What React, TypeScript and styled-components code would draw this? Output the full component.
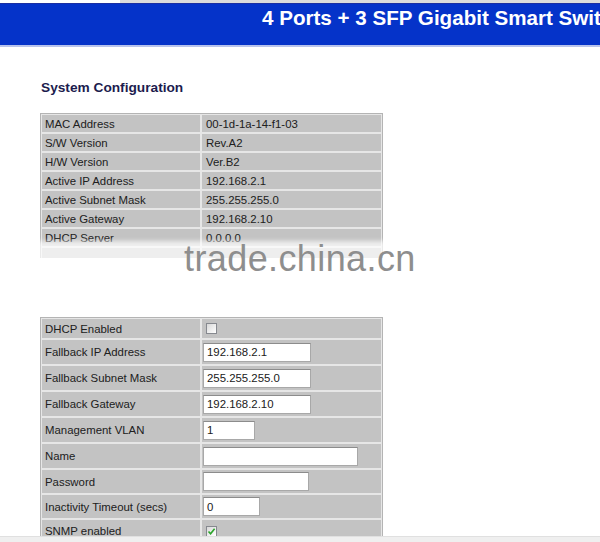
import React from "react";
import styled, { createGlobalStyle } from "styled-components";

const GlobalStyle = createGlobalStyle`
  html, body {
    margin: 0;
    padding: 0;
    background: #ffffff;
    font-family: "Liberation Sans", Arial, sans-serif;
  }
`;

const Page = styled.div`
  position: relative;
  width: 600px;
  height: 542px;
  display: flex;
  flex-direction: column;
  overflow: hidden;
`;

const TopEdge = styled.div`
  height: 3px;
  background: linear-gradient(to right, #ffffff 0 120px, #dcdcdc 120px);
`;

const Banner = styled.div`
  height: 44px;
  background: #0533c9;
  border-top: 1px solid #1b2fa3;
  border-bottom: 2px solid #b8c3ec;
  padding: 2px 0 0 262px;
  box-sizing: border-box;
  white-space: nowrap;
  overflow: hidden;
`;

const BannerTitle = styled.div`
  color: #ffffff;
  font-weight: bold;
  font-size: 20.6px;
  line-height: 24px;
`;

const Content = styled.div`
  flex: 1;
  overflow: hidden;
  padding: 33px 0 0 40px;
`;

const SectionTitle = styled.div`
  color: #1c1c4e;
  font-weight: bold;
  font-size: 13.7px;
  line-height: 16px;
  margin-left: 1px;
`;

const Clip = styled.div`
  height: 145px;
  margin-top: 17px;
  overflow: hidden;
`;

const Table = styled.div`
  display: grid;
  grid-template-columns: 158px 179px;
  gap: 2px;
  padding: 1px;
  width: fit-content;
  background: #e6e6e6;
  border: 1px solid #b4b4b4;
`;

const Cell = styled.div<{ $h: number; $pad?: number }>`
  height: ${(p) => p.$h}px;
  background: #c3c3c3;
  display: flex;
  align-items: center;
  padding-left: ${(p) => p.$pad ?? 3}px;
  font-size: 11.4px;
  color: #202020;
  white-space: nowrap;
`;

const FormTable = styled(Table)`
  margin-top: 59px;
`;

const Input = styled.div<{ $w: number }>`
  width: ${(p) => p.$w}px;
  height: 19px;
  box-sizing: border-box;
  background: #ffffff;
  border: 1px solid #a8a8a8;
  border-top-color: #8c8c8c;
  padding: 0 3px;
  display: flex;
  align-items: center;
  font-size: 11.4px;
  color: #202020;
`;

const Check = styled.span`
  width: 11px;
  height: 11px;
  box-sizing: border-box;
  border: 1px solid #86898f;
  background: linear-gradient(135deg, #d8d8d8, #ffffff);
  display: flex;
  align-items: center;
  justify-content: center;
  margin-left: 3px;
`;

const Fade = styled.div`
  position: absolute;
  left: 28px;
  top: 241px;
  width: 372px;
  height: 24px;
  background: rgba(255, 255, 255, 0.72);
  filter: blur(2px);
`;

const Watermark = styled.div`
  position: absolute;
  left: 184px;
  top: 239px;
  font-size: 36px;
  line-height: 40px;
  color: #8e8e8e;
  letter-spacing: 0.4px;
  white-space: nowrap;
`;

const StatusBar = styled.div`
  height: 5px;
  background: #efefef;
  border-top: 1px solid #e0e0e0;
`;

const info: [string, string][] = [
  ["MAC Address", "00-1d-1a-14-f1-03"],
  ["S/W Version", "Rev.A2"],
  ["H/W Version", "Ver.B2"],
  ["Active IP Address", "192.168.2.1"],
  ["Active Subnet Mask", "255.255.255.0"],
  ["Active Gateway", "192.168.2.10"],
  ["DHCP Server", "0.0.0.0"],
  ["", ""],
];

type Field =
  | { label: string; kind: "check"; checked: boolean; h: number }
  | { label: string; kind: "input"; value: string; width: number; h: number };

const fields: Field[] = [
  { label: "DHCP Enabled", kind: "check", checked: false, h: 19 },
  { label: "Fallback IP Address", kind: "input", value: "192.168.2.1", width: 108, h: 24 },
  { label: "Fallback Subnet Mask", kind: "input", value: "255.255.255.0", width: 108, h: 24 },
  { label: "Fallback Gateway", kind: "input", value: "192.168.2.10", width: 108, h: 24 },
  { label: "Management VLAN", kind: "input", value: "1", width: 52, h: 24 },
  { label: "Name", kind: "input", value: "", width: 155, h: 24 },
  { label: "Password", kind: "input", value: "", width: 106, h: 23 },
  { label: "Inactivity Timeout (secs)", kind: "input", value: "0", width: 57, h: 23 },
  { label: "SNMP enabled", kind: "check", checked: true, h: 22 },
];

function CheckBox({ checked }: { checked: boolean }) {
  return (
    <Check>
      {checked && (
        <svg width="9" height="9" viewBox="0 0 9 9">
          <path d="M1.5 4.5 L3.6 6.8 L7.6 1.8" fill="none" stroke="#2aa52a" strokeWidth="1.6" />
        </svg>
      )}
    </Check>
  );
}

export default function App() {
  return (
    <Page>
      <GlobalStyle />
      <TopEdge />
      <Banner>
        <BannerTitle>4 Ports + 3 SFP Gigabit Smart Switch</BannerTitle>
      </Banner>
      <Content>
        <SectionTitle>System Configuration</SectionTitle>
        <Clip>
          <Table>
            {info.map(([k, v], i) => (
              <React.Fragment key={i}>
                <Cell $h={17}>{k}</Cell>
                <Cell $h={17} $pad={4}>{v}</Cell>
              </React.Fragment>
            ))}
          </Table>
        </Clip>
        <FormTable>
          {fields.map((f) => (
            <React.Fragment key={f.label}>
              <Cell $h={f.h}>{f.label}</Cell>
              <Cell $h={f.h} $pad={1}>
                {f.kind === "check" ? (
                  <CheckBox checked={f.checked} />
                ) : (
                  <Input $w={f.width}>{f.value}</Input>
                )}
              </Cell>
            </React.Fragment>
          ))}
        </FormTable>
      </Content>
      <StatusBar />
      <Fade />
      <Watermark>trade.china.cn</Watermark>
    </Page>
  );
}
